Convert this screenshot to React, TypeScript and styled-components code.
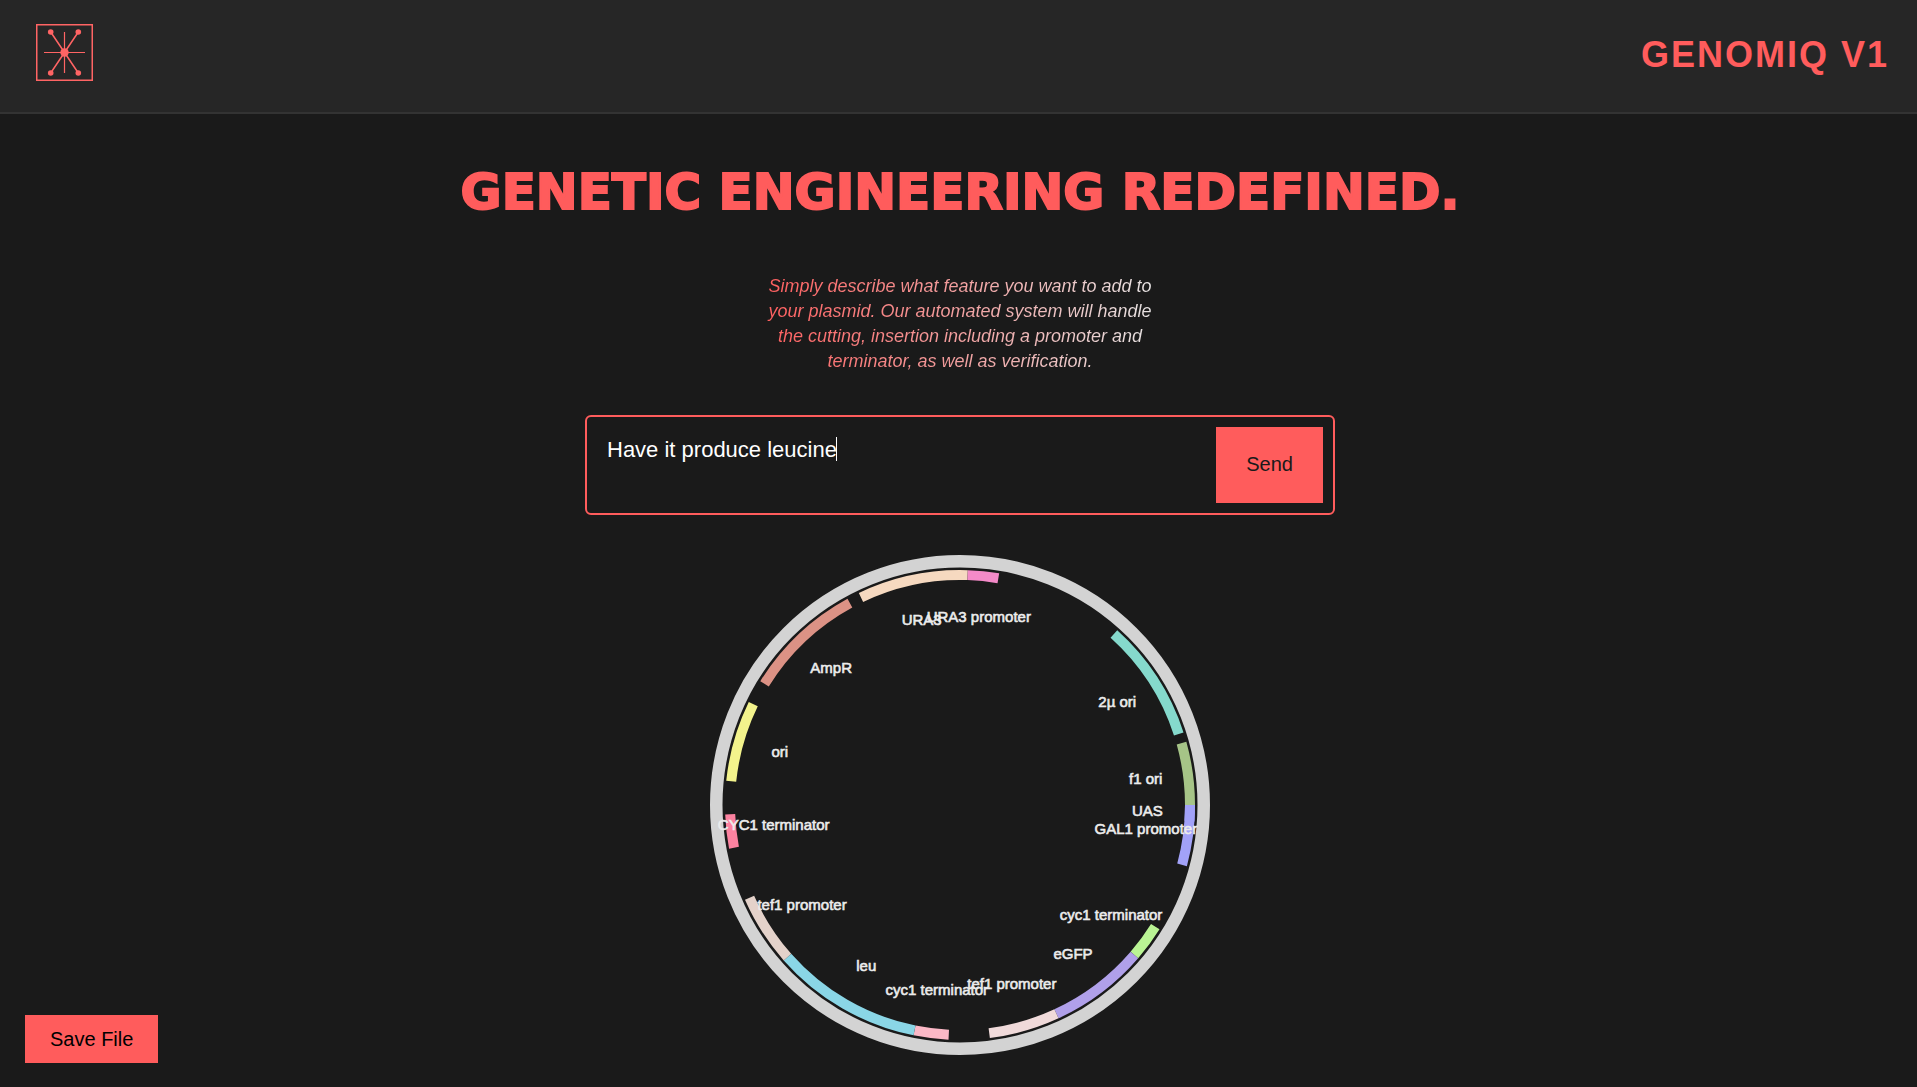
import React, { useLayoutEffect, useState } from "react";
import styled, { createGlobalStyle } from "styled-components";

const coral = "#ff5c5c";
const ink = "#1a1a1a";
const sans = '"Liberation Sans", Arial, sans-serif';
const promptFont = `22px ${sans}`;

const GlobalStyle = createGlobalStyle`
  * { box-sizing: border-box; }
  body {
    margin: 0;
    min-height: 100vh;
    background: ${ink};
    font-family: ${sans};
    color: ${coral};
  }
`;

const Header = styled.header`
  display: flex;
  justify-content: space-between;
  align-items: center;
  padding: 24px 28px 31px 36px;
  background: #262626;
  border-bottom: 2px solid #333333;
`;

const LogoLink = styled.a`
  display: flex;
  color: #ff6464;
`;

const Brand = styled.h2`
  margin: 4px 0 0;
  font-size: 36px;
  line-height: 40px;
  font-weight: 700;
  letter-spacing: 2px;
`;

const Main = styled.main`
  display: flex;
  flex-direction: column;
  align-items: center;
  padding: 48px 20px 32px 23px;
`;

const Headline = styled.h1`
  margin: 0;
  font-family: "Arial Black", "DejaVu Sans", sans-serif;
  font-size: 50px;
  line-height: 60px;
  font-weight: 900;
  text-align: center;
  -webkit-text-stroke: 2px ${coral};
`;

const Intro = styled.p`
  max-width: 400px;
  margin: 52px 0 41px;
  font-size: 18px;
  line-height: 25px;
  font-style: italic;
  text-align: center;
  color: transparent;
  background: linear-gradient(90deg, ${coral}, #e6e6e6);
  background-clip: text;
  -webkit-background-clip: text;
`;

const PromptForm = styled.form`
  display: flex;
  width: 100%;
  max-width: 750px;
  height: 100px;
  padding: 10px;
  border: 2px solid ${coral};
  border-radius: 6px;
`;

const PromptField = styled.div`
  position: relative;
  flex: 1;
  display: flex;
`;

const PromptInput = styled.textarea`
  flex: 1;
  padding: 10px;
  border: 0;
  outline: 0;
  resize: none;
  background: transparent;
  color: #ffffff;
  caret-color: transparent;
  font: ${promptFont};
  line-height: 26px;
`;

const Caret = styled.span`
  position: absolute;
  top: 10px;
  width: 1px;
  height: 24px;
  background: #ffffff;
`;

const Button = styled.button`
  border: 0;
  border-radius: 0;
  background: ${coral};
  font: 20px ${sans};
  cursor: pointer;
`;

const SendButton = styled(Button)`
  padding: 0 30px 2px;
  color: ${ink};
`;

const SaveButton = styled(Button)`
  position: fixed;
  left: 25px;
  bottom: 24px;
  height: 48px;
  padding: 0 25px;
  color: #000000;
`;

const PlasmidMap = styled.svg`
  display: block;
  width: 500px;
  max-width: 100%;
  margin-top: 40px;
  font-family: ${sans};
  font-size: 15px;
`;

type Feature = { label: string; start: number; end: number; color: string };

const features: Feature[] = [
  { label: "URA3", start: -25.5, end: 1.9, color: "#f6d9c0" },
  { label: "URA3 promoter", start: 1.9, end: 9.6, color: "#f48ac8" },
  { label: "2µ ori", start: 42, end: 72, color: "#85d9cc" },
  { label: "f1 ori", start: 74.4, end: 90, color: "#a6c487" },
  { label: "UAS", start: 90, end: 94, color: "#a2a2f8" },
  { label: "GAL1 promoter", start: 90, end: 105.1, color: "#a2a2f8" },
  { label: "cyc1 terminator", start: 121.9, end: 130.7, color: "#baf494" },
  { label: "eGFP", start: 130.7, end: 155.2, color: "#b0a0ea" },
  { label: "tef1 promoter", start: 155.2, end: 172.7, color: "#f0dada" },
  { label: "cyc1 terminator", start: 182.8, end: 191.4, color: "#fbb8c6" },
  { label: "leu", start: 191.4, end: 228.6, color: "#8ad6e6" },
  { label: "tef1 promoter", start: 228.6, end: 246.2, color: "#e4d2ca" },
  { label: "CYC1 terminator", start: 259.3, end: 267.7, color: "#fc82a0" },
  { label: "ori", start: 275.9, end: 296, color: "#f3f38c" },
  { label: "AmpR", start: 301.8, end: 331.4, color: "#dc9285" },
];

// Angles run clockwise from twelve o'clock.
function polar(radius: number, degrees: number) {
  const t = (degrees * Math.PI) / 180;
  return { x: radius * Math.sin(t), y: -radius * Math.cos(t) };
}

function arc(radius: number, start: number, end: number) {
  const a = polar(radius, start);
  const b = polar(radius, end);
  return `M${a.x} ${a.y}A${radius} ${radius} 0 0 1 ${b.x} ${b.y}`;
}

function Logo() {
  return (
    <svg width="57" height="57" viewBox="0 0 57 57" fill="none" stroke="currentColor" role="img" aria-label="Genomiq">
      <rect x="0.75" y="0.75" width="55.5" height="55.5" strokeWidth="1.5" />
      <path d="M28.5 8v41M8 28.5h41" strokeWidth="1.2" />
      <path d="M14.7 8l27.6 41M42.3 8L14.7 49" strokeWidth="1.5" />
      <g fill="currentColor" stroke="none">
        <circle cx="28.5" cy="28.5" r="4.2" />
        <circle cx="14.7" cy="8" r="2.8" />
        <circle cx="42.3" cy="8" r="2.8" />
        <circle cx="14.7" cy="49" r="2.8" />
        <circle cx="42.3" cy="49" r="2.8" />
      </g>
    </svg>
  );
}

function Plasmid() {
  return (
    <PlasmidMap viewBox="-250 -250 500 500" role="img" aria-label="Plasmid map">
      <circle r="243.75" fill="none" stroke="#d3d3d3" strokeWidth="12.5" />
      {features.map((f, i) => (
        <path key={i} d={arc(230, f.start, f.end)} fill="none" stroke={f.color} strokeWidth="10" />
      ))}
      {features.map((f, i) => {
        const p = polar(187.5, (f.start + f.end) / 2);
        return (
          <text key={i} x={p.x} y={p.y + 4} textAnchor="middle" fill="#ececec" stroke="#ececec" strokeWidth="0.6">
            {f.label}
          </text>
        );
      })}
    </PlasmidMap>
  );
}

function Prompt() {
  const [text, setText] = useState("Have it produce leucine");
  const [caretX, setCaretX] = useState(0);

  useLayoutEffect(() => {
    const ctx = document.createElement("canvas").getContext("2d");
    if (!ctx) return;
    ctx.font = promptFont;
    setCaretX(10 + Math.floor(ctx.measureText(text).width));
  }, [text]);

  return (
    <PromptForm onSubmit={(e) => e.preventDefault()}>
      <PromptField>
        <PromptInput
          aria-label="Describe the feature to add"
          value={text}
          spellCheck={false}
          onChange={(e) => setText(e.target.value)}
        />
        <Caret style={{ left: caretX }} />
      </PromptField>
      <SendButton type="submit">Send</SendButton>
    </PromptForm>
  );
}

export default function App() {
  return (
    <>
      <GlobalStyle />
      <Header>
        <LogoLink href="#">
          <Logo />
        </LogoLink>
        <Brand>GENOMIQ V1</Brand>
      </Header>
      <Main>
        <Headline>GENETIC ENGINEERING REDEFINED.</Headline>
        <Intro>
          Simply describe what feature you want to add to your plasmid. Our automated system will
          handle the cutting, insertion including a promoter and terminator, as well as
          verification.
        </Intro>
        <Prompt />
        <Plasmid />
      </Main>
      <SaveButton type="button">Save File</SaveButton>
    </>
  );
}
